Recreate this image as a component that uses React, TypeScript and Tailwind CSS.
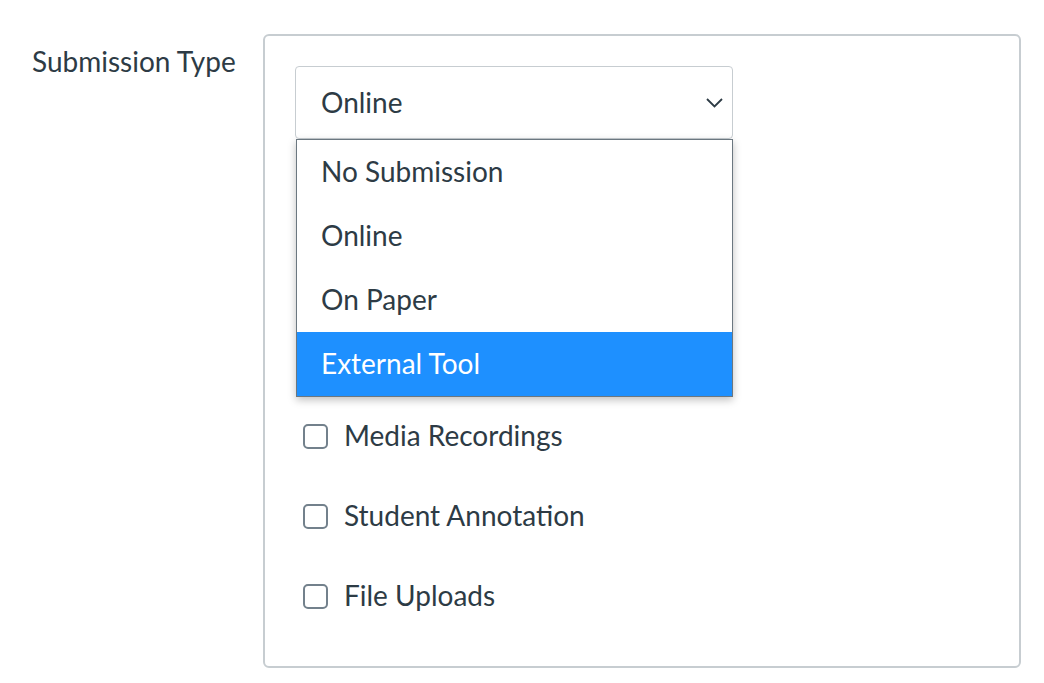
import { useState } from "react";

const font = { fontFamily: "Lato, 'Noto Sans', sans-serif" };

function Checkbox({ label }: { label: string }) {
  return (
    <label className="flex h-[80px] items-center">
      <span className="ml-[8px] h-[25px] w-[25px] shrink-0 rounded-[5px] border-2 border-[#73818c] bg-white" />
      <span className="ml-[16px] pb-[2px] text-[28px] leading-[34px] text-[#2d3b45]">{label}</span>
    </label>
  );
}

export default function App() {
  const [selected] = useState("Online");
  const options = ["No Submission", "Online", "On Paper", "External Tool"];
  const highlighted = "External Tool";

  return (
    <div className="min-h-[683px] w-full bg-white pt-[34px] pl-[32px]" style={font}>
      <div className="flex items-start">
        <div className="mt-[10px] w-[231px] text-[28px] leading-[34px] text-[#2d3b45]">
          Submission Type
        </div>

        <div className="w-[758px] rounded-[6px] border-2 border-[#c7cdd1] px-[30px] pt-[30px] pb-[30px]">
          <div className="relative w-[438px]">
            <div className="flex h-[73px] items-center justify-between rounded-[4px] border border-[#c7cdd1] bg-white pl-[25px] pr-[9px]">
              <span className="pb-[2px] text-[28px] leading-[34px] text-[#2d3b45]">{selected}</span>
              <svg width="17" height="10" viewBox="0 0 17 10" fill="none">
                <path d="M1 1l7.5 7.5L16 1" stroke="#2d3b45" strokeWidth="1.8" />
              </svg>
            </div>

            <ul className="absolute left-[1px] top-full z-10 w-[437px] border border-[#6b7780] bg-white shadow-[0_3px_8px_rgba(0,0,0,0.25)]">
              {options.map((opt) => (
                <li
                  key={opt}
                  className={
                    opt === highlighted
                      ? "flex h-[64px] items-center bg-[#1e90ff] pb-[2px] pl-[24px] text-[28px] leading-[34px] text-white"
                      : "flex h-[64px] items-center pb-[2px] pl-[24px] text-[28px] leading-[34px] text-[#2d3b45]"
                  }
                >
                  {opt}
                </li>
              ))}
            </ul>
          </div>

          {/* options hidden under the open menu */}
          <div className="mt-[257px]">
            <Checkbox label="Media Recordings" />
            <Checkbox label="Student Annotation" />
            <Checkbox label="File Uploads" />
          </div>
        </div>
      </div>
    </div>
  );
}
